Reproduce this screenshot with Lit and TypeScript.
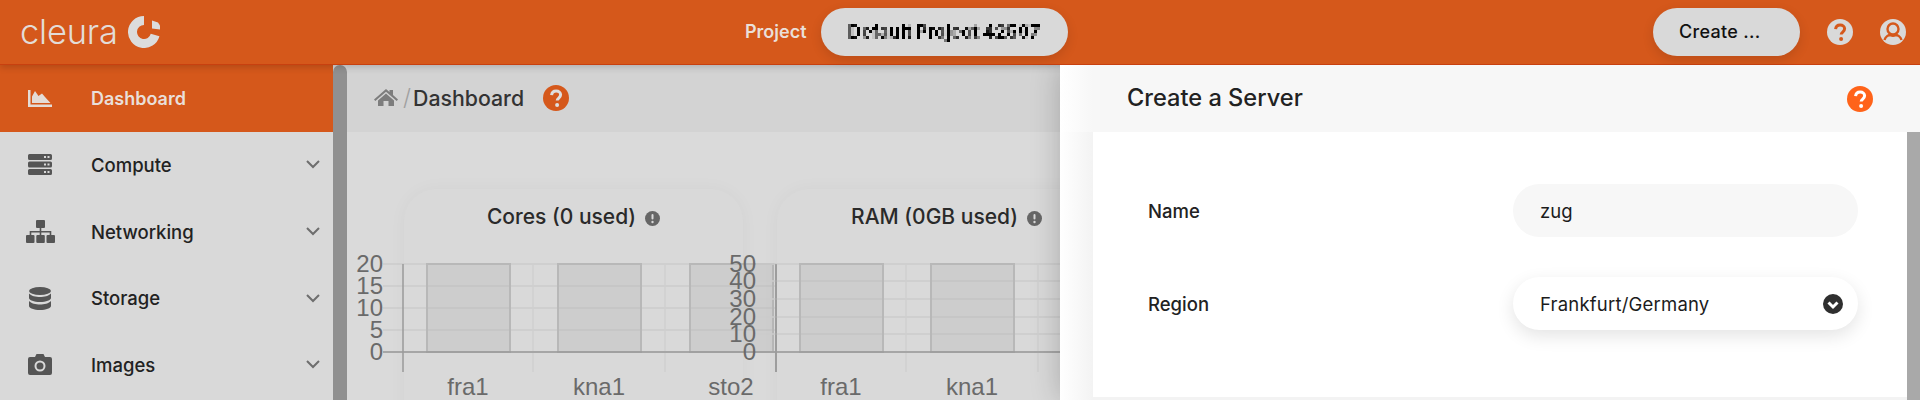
import { LitElement, css, html, svg } from 'lit';
import { customElement, property } from 'lit/decorators.js';

const helpIcon = (bg: string, fg: string) => html`
  <svg class="help" viewBox="0 0 26 26" width="26" height="26">
    <circle cx="13" cy="13" r="13" fill=${bg}></circle>
    <path d="M8.6 10.2c.2-2.7 2-4.2 4.6-4.2 2.5 0 4.4 1.5 4.4 3.8 0 3.2-3.4 3.2-3.4 5.7" fill="none" stroke=${fg} stroke-width="3"></path>
    <circle cx="14.1" cy="20" r="2" fill=${fg}></circle>
  </svg>
`;

const navIcons: Record<string, unknown> = {
  dashboard: svg`<path d="M0 0h2.5v14.5H24V17H0z"></path><path d="M4 13V6.5L7 1l3.5 5L14 3.5l3 3.5L22.5 13z"></path>`,
  compute: svg`
    <path fill-rule="evenodd" d="M1.5 0h21A1.5 1.5 0 0 1 24 1.5v3A1.5 1.5 0 0 1 22.5 6h-21A1.5 1.5 0 0 1 0 4.5v-3A1.5 1.5 0 0 1 1.5 0zM16 2v2h2V2zm3.5 0v2h2V2z"></path>
    <path fill-rule="evenodd" d="M1.5 7.5h21A1.5 1.5 0 0 1 24 9v3a1.5 1.5 0 0 1-1.5 1.5h-21A1.5 1.5 0 0 1 0 12V9a1.5 1.5 0 0 1 1.5-1.5zm14.5 2v2h2v-2zm3.5 0v2h2v-2z"></path>
    <path fill-rule="evenodd" d="M1.5 15h21a1.5 1.5 0 0 1 1.5 1.5v3a1.5 1.5 0 0 1-1.5 1.5h-21A1.5 1.5 0 0 1 0 19.5v-3A1.5 1.5 0 0 1 1.5 15zM16 17v2h2v-2zm3.5 0v2h2v-2z"></path>`,
  networking: svg`
    <rect x="10" y="0" width="9" height="8" rx="1"></rect>
    <rect x="0" y="15" width="8.5" height="8" rx="1"></rect>
    <rect x="10.3" y="15" width="8.5" height="8" rx="1"></rect>
    <rect x="20.5" y="15" width="8.5" height="8" rx="1"></rect>
    <path d="M13.7 8h1.6v3h10v4h-1.6v-2.4h-8.4V15h-1.6v-2.4H5.3V15H3.7v-4h10z"></path>`,
  storage: svg`
    <ellipse cx="11" cy="4" rx="11" ry="4"></ellipse>
    <path d="M0 6.5C2 9 7 10 11 10s9-1 11-3.5V11c0 2.2-5 4-11 4S0 13.2 0 11z"></path>
    <path d="M0 14c2 2.5 7 3.5 11 3.5s9-1 11-3.500v5c0 2.2-5 4-11 4S0 21.2 0 19z"></path>`,
  images: svg`
    <path fill-rule="evenodd" d="M2 3h5l1.5-3h7L17 3h5a2 2 0 0 1 2 2v14a2 2 0 0 1-2 2H2a2 2 0 0 1-2-2V5a2 2 0 0 1 2-2zm10 3.5a5.5 5.5 0 1 0 0 11 5.5 5.5 0 0 0 0-11zm0 2a3.5 3.5 0 1 1 0 7 3.5 3.5 0 0 1 0-7z"></path>`,
};

const navSizes: Record<string, [number, number]> = {
  dashboard: [24, 17],
  compute: [24, 21],
  networking: [29, 23],
  storage: [22, 23],
  images: [24, 21],
};

@customElement('quota-card')
export class QuotaCard extends LitElement {
  @property({ type: String }) heading = '';
  @property({ type: Array }) ticks: { label: string; y: number }[] = [];

  render() {
    const regions = [
      { name: 'fra1', barX: 23, labelX: 64 },
      { name: 'kna1', barX: 154, labelX: 195 },
      { name: 'sto2', barX: 286, labelX: 327 },
    ];
    return html`
      <article class="card">
        <h3>
          ${this.heading}
          <svg class="info" viewBox="0 0 15 15" width="15" height="15">
            <circle cx="7.5" cy="7.5" r="7.5" fill="#666"></circle>
            <rect x="6.5" y="3" width="2" height="5.5" rx="1" fill="#d9d9d9"></rect>
            <circle cx="7.5" cy="11" r="1.2" fill="#d9d9d9"></circle>
          </svg>
        </h3>
        <svg class="chart" width="372" height="150" viewBox="0 0 372 150">
          ${this.ticks.map(
            (t) => svg`
              <line x1="-21" x2="372" y1=${t.y} y2=${t.y} stroke="#cbcbcb" stroke-width="1.5"></line>
              <text class="tick" x="-21" y=${t.y + 8}>${t.label}</text>`,
          )}
          ${[129, 261].map(
            (x) => svg`<line x1=${x} x2=${x} y1="13" y2="121" stroke="#cfcfcf" stroke-width="1.5"></line>`,
          )}
          ${regions.map(
            (r) => svg`
              <rect x=${r.barX} y="13" width="83" height="88" fill="#b8b8b8" fill-opacity="0.36" stroke="#b8b8b8" stroke-width="2"></rect>
              <text class="region" x=${r.labelX} y="144">${r.name}</text>`,
          )}
          <line x1="-21" x2="372" y1="101" y2="101" stroke="#999" stroke-width="1.5"></line>
          <line x1="-1" x2="-1" y1="13" y2="121" stroke="#9a9a9a" stroke-width="1.5"></line>
          <line x1="372" x2="372" y1="13" y2="121" stroke="#9a9a9a" stroke-width="1.5"></line>
        </svg>
      </article>
    `;
  }

  static styles = css`
    :host {
      display: block;
      width: 339px;
      flex: none;
    }

    .card {
      height: 300px;
      box-sizing: border-box;
      padding-top: 16px;
      border-radius: 32px;
      background: #d9d9d9;
      box-shadow: 0 0 18px rgba(0, 0, 0, 0.035);
    }

    h3 {
      display: flex;
      align-items: center;
      justify-content: center;
      gap: 9px;
      margin: 0;
      height: 24px;
      color: #2a2a2a;
      font-size: 21px;
      font-weight: 500;
      line-height: 24px;
    }

    .info {
      margin-top: 2px;
    }

    .chart {
      display: block;
      margin-top: 22px;
      overflow: visible;
    }

    text {
      font-family: 'Liberation Sans', Arial, sans-serif;
      font-size: 24px;
      fill: #6a6a6a;
    }

    .tick {
      text-anchor: end;
    }

    .region {
      text-anchor: middle;
    }
  `;
}

@customElement('app-root')
export class AppRoot extends LitElement {
  render() {
    const nav = ['Dashboard', 'Compute', 'Networking', 'Storage', 'Images'];
    const coreTicks = [
      { label: '20', y: 13 },
      { label: '15', y: 35 },
      { label: '10', y: 57 },
      { label: '5', y: 79 },
      { label: '0', y: 101 },
    ];
    const ramTicks = [
      { label: '50', y: 13 },
      { label: '40', y: 30 },
      { label: '30', y: 48 },
      { label: '20', y: 66 },
      { label: '10', y: 83 },
      { label: '0', y: 101 },
    ];

    return html`
      <svg class="defs" width="0" height="0">
        <filter id="mosaic" x="0" y="0" width="100%" height="100%" color-interpolation-filters="sRGB">
          <feFlood x="1" y="1" width="1" height="1"></feFlood>
          <feComposite width="3" height="3"></feComposite>
          <feTile result="grid"></feTile>
          <feComposite in="SourceGraphic" in2="grid" operator="in"></feComposite>
          <feMorphology operator="dilate" radius="1"></feMorphology>
        </filter>
      </svg>
      <header class="top">
        <div class="logo">
          <span class="wordmark">cleura</span>
          <svg viewBox="0 0 32 32" width="32" height="32">
            <path d="M16 4.5A11.5 11.5 0 1 0 27.1 19" fill="none" stroke="#dcdcdc" stroke-width="9"></path>
            <path d="M24 4.5 30 6.5 32 9.5V13.5L24 12.5z" fill="#dcdcdc"></path>
          </svg>
        </div>
        <div class="project">
          <span class="project-label">Project</span>
          <button class="pill project-pill"><span>Default Project 42597</span></button>
        </div>
        <button class="pill create">Create ...</button>
        ${helpIcon('#d9d9d9', '#d5581b')}
        <svg class="profile" viewBox="0 0 26 26" width="26" height="26">
          <circle cx="13" cy="13" r="13" fill="#d9d9d9"></circle>
          <circle cx="13" cy="10" r="5.5" fill="none" stroke="#d5581b" stroke-width="2.4"></circle>
          <path d="M4.5 21c1-3.5 4-5 6-5 1.500 1 3.500 1 5 0 2 0 5 1.500 6 5" fill="none" stroke="#d5581b" stroke-width="2.4"></path>
        </svg>
      </header>

      <div class="body">
        <nav class="side">
          ${nav.map((item, i) => {
            const key = item.toLowerCase();
            const [w, h] = navSizes[key];
            return html`
              <a class="nav-item ${i === 0 ? 'active' : ''}">
                <span class="nav-icon">
                  <svg viewBox="0 0 ${w} ${h}" width=${w} height=${h}>${navIcons[key]}</svg>
                </span>
                <span class="nav-text">${item}</span>
                ${i > 0
                  ? html`<svg class="chev" viewBox="0 0 14 9" width="14" height="9">
                      <path d="M1 1l6 6 6-6" fill="none" stroke="#6e6e6e" stroke-width="2"></path>
                    </svg>`
                  : null}
              </a>
            `;
          })}
        </nav>
        <div class="side-scroll"><div class="thumb"></div></div>

        <main class="main">
          <div class="crumbs">
            <svg viewBox="0 0 24 17" width="24" height="17" fill="#7d7d7d">
              <path d="M12 0 15.5 3V1H19V6l5 4.5-1.3 1.500L12 2.800 1.300 12 0 10.500z"></path>
              <path d="M4 11.5 12 4.500l8 7V17h-5.500v-5h-5v5H4z"></path>
            </svg>
            <span class="slash">/</span>
            <span class="crumb-text">Dashboard</span>
            ${helpIcon('#d5581b', '#dedede')}
          </div>
          <div class="cards">
            <quota-card heading="Cores (0 used)" .ticks=${coreTicks}></quota-card>
            <quota-card heading="RAM (0GB used)" .ticks=${ramTicks}></quota-card>
          </div>

          <section class="panel">
            <div class="panel-head">
              <h2>Create a Server</h2>
              ${helpIcon('#ff6319', '#ffffff')}
            </div>
            <div class="panel-body">
              <div class="strip"></div>
              <div class="form-col">
                <form class="form">
                  <label>Name</label>
                  <div class="field">zug</div>
                  <label>Region</label>
                  <div class="field select">
                    <span>Frankfurt/Germany</span>
                    <svg viewBox="0 0 20 20" width="20" height="20">
                      <circle cx="10" cy="10" r="10" fill="#2f2f2f"></circle>
                      <path d="M5.5 8.5 10 13l4.500-4.500" fill="none" stroke="#fff" stroke-width="3"></path>
                    </svg>
                  </div>
                </form>
                <div class="foot"></div>
              </div>
              <div class="panel-scroll"></div>
            </div>
          </section>
        </main>
      </div>
    `;
  }

  static styles = css`
    :host {
      display: block;
      width: 1920px;
      height: 400px;
      overflow: hidden;
      background: #d9d9d9;
      font-family: Inter, 'Liberation Sans', Arial, sans-serif;
    }

    .defs {
      display: block;
      height: 0;
    }

    .top {
      position: relative;
      z-index: 1;
      display: flex;
      align-items: center;
      height: 65px;
      box-sizing: border-box;
      padding: 0 14px 1px 20px;
      background: #d5581b;
      border-bottom: 1px solid #c8400f;
      box-shadow: 0 2px 7px rgba(0, 0, 0, 0.18);
    }

    .logo {
      display: flex;
      align-items: center;
      gap: 12px;
      width: 725px;
    }

    .wordmark {
      width: 96px;
      color: #e3dcd7;
      font-size: 34.5px;
      font-weight: 300;
      letter-spacing: -0.2px;
    }

    .project {
      display: flex;
      align-items: center;
      gap: 14px;
      width: 908px;
    }

    .project-label {
      color: #eadfd8;
      font-size: 18px;
      font-weight: 600;
    }

    .pill {
      height: 48px;
      border: 0;
      border-radius: 24px;
      background: #d9d9d9;
      box-shadow: 0 4px 12px rgba(0, 0, 0, 0.12);
      color: #111;
      font: 500 18px Inter, 'Liberation Sans', Arial, sans-serif;
    }

    .project-pill {
      width: 247px;
      color: #000;
      font-weight: 700;
    }

    .project-pill span {
      display: block;
      filter: url(#mosaic);
    }

    .create {
      width: 147px;
      margin-right: 27px;
      padding: 0 0 0 26px;
      text-align: left;
      letter-spacing: 0.3px;
    }

    .profile {
      margin-left: 27px;
    }

    .help {
      flex: none;
    }

    .body {
      display: flex;
      height: 335px;
    }

    .side {
      flex: none;
      width: 333px;
      background: #d9d9d9;
    }

    .nav-item {
      display: flex;
      align-items: center;
      height: 66.67px;
      color: #222;
      font-size: 18.5px;
      font-weight: 500;
    }

    .nav-item.active {
      background: #d5581b;
      color: #e9dfd9;
      font-size: 18px;
      font-weight: 600;
    }

    .nav-icon {
      display: flex;
      align-items: center;
      justify-content: center;
      width: 80px;
      margin-right: 11px;
      fill: #555;
    }

    .active .nav-icon {
      fill: #e4dcd7;
    }

    .nav-text {
      flex: 1;
    }

    .chev {
      margin-right: 13px;
    }

    .side-scroll {
      flex: none;
      width: 14px;
      background: #d6d6d6;
    }

    .thumb {
      height: 100%;
      border-radius: 7px 7px 0 0;
      background: #909090;
    }

    .main {
      position: relative;
      flex: 1;
      min-width: 0;
      overflow: hidden;
      background: #dadada;
    }

    .crumbs {
      display: flex;
      align-items: center;
      height: 67px;
      box-sizing: border-box;
      padding: 0 0 2px 27px;
      background: #d3d3d3;
    }

    .slash {
      margin: 0 2px 0 5px;
      color: #a0a0a0;
      font-size: 23px;
      font-weight: 300;
    }

    .crumb-text {
      margin-right: 19px;
      color: #333;
      font-size: 21.3px;
      font-weight: 500;
    }

    .cards {
      display: flex;
      gap: 34px;
      padding: 57px 0 0 57px;
    }

    .panel {
      position: absolute;
      top: 0;
      right: 0;
      bottom: 0;
      z-index: 2;
      display: flex;
      flex-direction: column;
      width: 860px;
      background: #fff;
      box-shadow: 0 0 28px rgba(0, 0, 0, 0.22);
    }

    .panel-head {
      display: flex;
      align-items: center;
      justify-content: space-between;
      flex: none;
      height: 67px;
      box-sizing: border-box;
      padding: 0 47px 0 67px;
      background: linear-gradient(90deg, #fff 0, #f7f7f7 33px);
    }

    h2 {
      margin: 0 0 2px;
      color: #222;
      font-size: 23.6px;
      font-weight: 500;
    }

    .panel-body {
      display: flex;
      flex: 1;
      min-height: 0;
    }

    .strip {
      flex: none;
      width: 33px;
      background: linear-gradient(90deg, #fff 0, #f3f3f3 100%);
    }

    .form-col {
      display: flex;
      flex-direction: column;
      flex: 1;
    }

    .form {
      display: grid;
      flex: 1;
      grid-template-columns: 365px 345px;
      grid-auto-rows: 53px;
      align-content: start;
      row-gap: 40px;
      padding: 52px 0 0 55px;
      color: #222;
      font-size: 18.5px;
      font-weight: 450;
    }

    label {
      align-self: center;
    }

    .field {
      display: flex;
      align-items: center;
      justify-content: space-between;
      box-sizing: border-box;
      padding: 0 15px 0 27px;
      border-radius: 27px;
      background: #f7f7f7;
      color: #1c1c1c;
      font-weight: 400;
    }

    .select {
      background: #fff;
      box-shadow: 0 6px 18px rgba(0, 0, 0, 0.11);
      letter-spacing: 0.2px;
    }

    .foot {
      flex: none;
      height: 3px;
      background: #f3f3f3;
    }

    .panel-scroll {
      flex: none;
      width: 13px;
      background: #a9a9a9;
    }
  `;
}
